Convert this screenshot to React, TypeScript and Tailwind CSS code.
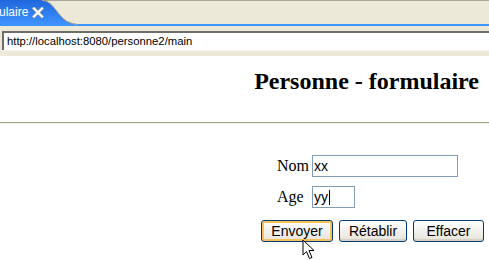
const sans = "font-['Liberation_Sans',Arial,sans-serif]";
const serif = "font-['Liberation_Serif','Times_New_Roman',serif]";

const TabBar = () => (
	<div className="relative h-[24px] border-t border-[#ACA899] bg-[#ECE9D8]">
		<div className="absolute -top-px left-0 h-[25px] w-[80px]">
			<svg width="80" height="25" viewBox="0 0 80 25" className="absolute left-0 top-0">
				<defs>
					<linearGradient id="tabg" x1="0" y1="0" x2="0" y2="1">
						<stop offset="0" stopColor="#1F67DD" />
						<stop offset="1" stopColor="#3F93FF" />
					</linearGradient>
				</defs>
				<path d="M0 0 H42 C50 0 54 8 60 15 C65 21 69 23 77 24 V25 H0 Z" fill="url(#tabg)" />
				<path d="M42 0.5 C50 0.5 54 8 60 15 C65 21 69 23 77 24.5" fill="none" stroke="#B6A98C" strokeWidth="1" />
			</svg>
			<span className={`absolute left-[-1px] top-[5px] text-[12px] leading-[14px] text-white ${sans}`}>
				ulaire
			</span>
			<svg width="12" height="11" viewBox="0 0 12 11" className="absolute left-[32px] top-[7px]">
				<path d="M2 1.5 L10 9.5 M10 1.5 L2 9.5" stroke="#7a8aa8" strokeWidth="3.6" strokeLinecap="square" />
				<path d="M2 1.5 L10 9.5 M10 1.5 L2 9.5" stroke="#ffffff" strokeWidth="2.2" strokeLinecap="square" />
			</svg>
		</div>
	</div>
);

const XpButton = ({ label, width, hover }: { label: string; width: string; hover?: boolean }) => (
	<div
		className={`flex h-[22px] items-center justify-center rounded-[3px] border border-[#003C74] bg-gradient-to-b from-white to-[#E6E3DA] text-[14px] text-black ${width} ${sans} ${
			hover ? "shadow-[inset_0_0_0_2px_#F7C15A]" : "shadow-[inset_0_-2px_0_#D6D0C5]"
		}`}
	>
		{label}
	</div>
);

const App = () => {
	return (
		<div className="h-[260px] w-[489px] overflow-hidden bg-white">
			<TabBar />
			<div className="h-[2px] bg-[#3D95FF]" />
			<div className="h-[5px] bg-[#ECE9D8]" />
			<div className="h-[19px] bg-[#ECE9D8] pl-[2px]">
				<div className="flex h-full items-center border-l-2 border-t-2 border-[#6E6D66] bg-white pl-[3px]">
					<span className={`text-[11.3px] text-black ${sans}`}>http://localhost:8080/personne2/main</span>
				</div>
			</div>
			<div className="h-[6px] border-t border-[#F6F5EE] bg-[#ECE9D8]" />

			<div className="relative">
				<h1 className={`mt-[11px] pr-[10px] text-right text-[24px] font-bold leading-[28px] text-black ${serif}`}>
					Personne - formulaire
				</h1>
				<div className="mt-[27px] border-t border-b border-t-[#A3A394] border-b-[#EDEDE5]" />

				<div className="mt-[30px] flex flex-col items-end pr-[5px]">
					<div className="mr-[26px] flex flex-col gap-[7px]">
						<div className="flex items-center">
							<span className={`w-[35px] text-[16px] text-black ${serif}`}>Nom</span>
							<div className={`flex h-[22px] w-[146px] items-center border border-[#7F9DB9] pl-[1px] text-[14px] text-black ${sans}`}>
								xx
							</div>
						</div>
						<div className="flex items-center">
							<span className={`w-[35px] text-[16px] text-black ${serif}`}>Age</span>
							<div className={`flex h-[22px] w-[43px] items-center border border-[#7F9DB9] pl-[1px] text-[14px] text-black ${sans}`}>
								yy
								<span className="ml-px h-[15px] w-px bg-black" />
							</div>
						</div>
					</div>
					<div className="mt-[11px] flex gap-[6px]">
						<XpButton label="Envoyer" width="w-[72px]" hover />
						<XpButton label="Rétablir" width="w-[68px]" />
						<XpButton label="Effacer" width="w-[71px]" />
					</div>
				</div>

				<svg width="14" height="21" viewBox="0 0 14 21" className="absolute left-[302px] top-[172px]">
					<path
						d="M1 1 V16 L4.5 12.5 L7.5 19.5 L10 18.5 L7 11.5 H12 Z"
						fill="#ffffff"
						stroke="#000000"
						strokeWidth="1"
						strokeLinejoin="miter"
					/>
				</svg>
			</div>
		</div>
	);
};

export default App;
